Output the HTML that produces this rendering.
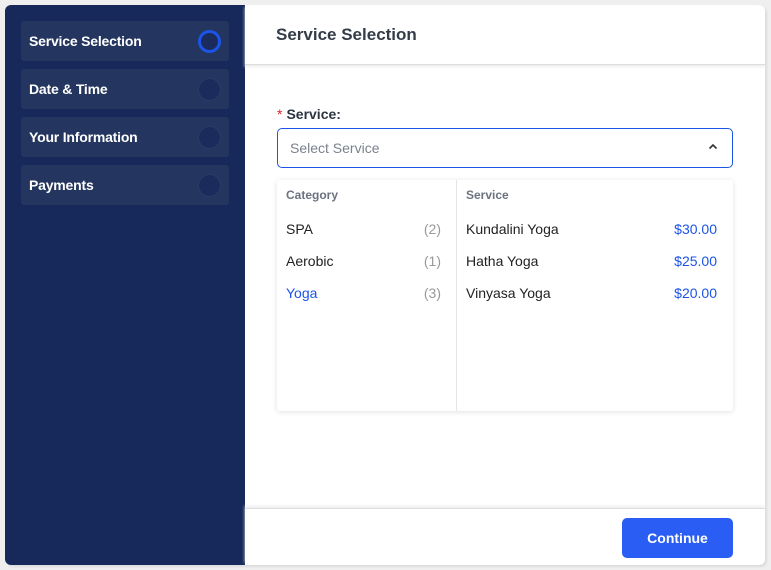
<!DOCTYPE html>
<html><head><style>
*{box-sizing:border-box;margin:0;padding:0}
body{width:771px;height:570px;background:#efefef;font-family:"Liberation Sans",sans-serif;position:relative;overflow:hidden}
.card{position:absolute;left:5px;top:5px;width:760px;height:560px;background:#fff;border-radius:6px;overflow:hidden;box-shadow:2px 2px 2px #ddd}
.side{position:absolute;left:0;top:0;width:240px;height:560px;background:#17295a}
.item{position:absolute;left:16px;width:208px;height:40px;background:#24365f;border-radius:3px;color:#fff;font-size:14px;line-height:40px;padding-left:8px;font-weight:bold;letter-spacing:-0.2px}
.item i{position:absolute;right:8px;top:9px;width:23px;height:23px;border-radius:50%;background:#1b2b5b;border:1px solid #2a3a66}
.item i.a{border:3px solid #1c54e8}
.hdr{position:absolute;left:240px;top:0;width:520px;height:60px;border-bottom:1px solid #ddd;box-shadow:0 2px 3px #eee;font-size:17px;font-weight:bold;color:#333c48;padding:20px 0 0 31px}
.lab{position:absolute;left:272px;top:101px;font-size:14px;font-weight:bold;color:#2c3440}
.lab b{color:#d22;font-weight:normal;margin-right:4px}
.sel{position:absolute;left:272px;top:123px;width:456px;height:40px;border:1px solid #1c54e8;border-radius:5px;font-size:14px;color:#7a828c;line-height:38px;padding-left:12px}
.sel svg{position:absolute;right:14px;top:14px}
.dd{position:absolute;left:272px;top:175px;width:456px;height:231px;background:#fff;box-shadow:0 1px 6px rgba(0,0,0,.12);border-radius:3px}
.col{position:absolute;top:0;height:231px}
.h{font-size:12px;font-weight:bold;color:#6b7280;position:absolute;top:8px}
.r{position:absolute;font-size:14px;color:#222;width:100%}
.r span{position:absolute;right:16px}
.foot{position:absolute;left:240px;top:503px;width:520px;height:57px;border-top:1px solid #ddd;box-shadow:0 -2px 3px #eee}
.btn{position:absolute;left:377px;top:9px;width:111px;height:40px;background:#2a5df4;border-radius:5px;color:#fff;font-size:14px;font-weight:bold;text-align:center;line-height:40px}
</style></head><body>
<div class="card">
<div class="side">
<div class="item" style="top:16px">Service Selection<i class="a"></i></div>
<div class="item" style="top:64px">Date &amp; Time<i></i></div>
<div class="item" style="top:112px">Your Information<i></i></div>
<div class="item" style="top:160px">Payments<i></i></div>
</div>
<div class="hdr">Service Selection</div>
<div class="lab"><b>*</b>Service:</div>
<div class="sel">Select Service<svg width="10" height="7" viewBox="0 0 10 7"><path d="M1.5 5.5L5 2l3.5 3.5" fill="none" stroke="#333" stroke-width="1.6"/></svg></div>
<div class="dd">
<div class="col" style="left:0;width:180px;border-right:1px solid #e5e5e5">
<div class="h" style="left:9px">Category</div>
<div class="r" style="top:41px;left:9px;width:171px">SPA<span style="color:#999">(2)</span></div>
<div class="r" style="top:73px;left:9px;width:171px">Aerobic<span style="color:#999">(1)</span></div>
<div class="r" style="top:105px;left:9px;width:171px;color:#1c54e8">Yoga<span style="color:#999">(3)</span></div>
</div>
<div class="col" style="left:180px;width:276px">
<div class="h" style="left:9px">Service</div>
<div class="r" style="top:41px;left:9px;width:267px">Kundalini Yoga<span style="color:#1c54e8">$30.00</span></div>
<div class="r" style="top:73px;left:9px;width:267px">Hatha Yoga<span style="color:#1c54e8">$25.00</span></div>
<div class="r" style="top:105px;left:9px;width:267px">Vinyasa Yoga<span style="color:#1c54e8">$20.00</span></div>
</div>
</div>
<div class="foot"><div class="btn">Continue</div></div>
</div>
</body></html>
